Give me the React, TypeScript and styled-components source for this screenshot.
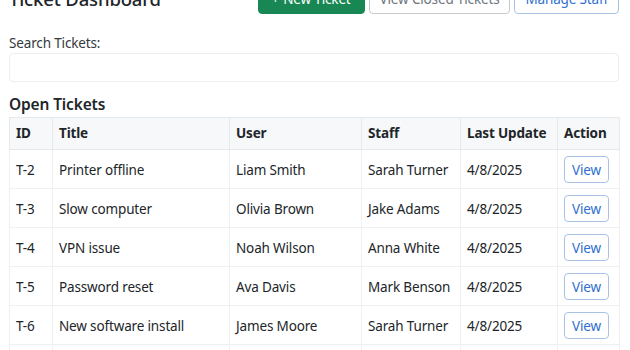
import styled, { createGlobalStyle } from "styled-components";

const GlobalStyle = createGlobalStyle`
  * {
    box-sizing: border-box;
  }
  body {
    margin: 0;
    background: #fff;
    color: #212529;
    font-family: "Noto Sans", "Open Sans", sans-serif;
    font-size: 13.5px;
    letter-spacing: -0.15px;
    overflow: hidden;
  }
`;

const Page = styled.div`
  padding: 0 11px 0 9px;
  width: 630px;
`;

const Header = styled.div`
  display: flex;
  align-items: center;
  justify-content: space-between;
  height: 31px;
  margin-top: -17px;
`;

const Title = styled.h1`
  margin: 0;
  font-size: 18.5px;
  font-weight: 500;
  line-height: 24px;
`;

const ButtonGroup = styled.div`
  display: flex;
  gap: 4px;
`;

const Button = styled.button<{ $variant: "success" | "secondary" | "primary" }>`
  height: 31px;
  padding: 0 ${(p) => (p.$variant === "success" ? 13 : 10)}px;
  border-radius: 4px;
  font-family: inherit;
  font-size: 13.5px;
  letter-spacing: -0.15px;
  line-height: 20px;
  cursor: pointer;
  background: ${(p) => (p.$variant === "success" ? "#198754" : "#fff")};
  color: ${(p) =>
    p.$variant === "success"
      ? "#fff"
      : p.$variant === "secondary"
      ? "#6c757d"
      : "#2f6fd1"};
  border: 1px solid
    ${(p) =>
      p.$variant === "success"
        ? "#198754"
        : p.$variant === "secondary"
        ? "#c6cace"
        : "#a9c3e6"};
`;

const Plus = styled.span`
  margin-right: 4px;
`;

const Label = styled.label`
  display: block;
  margin-top: 19px;
  line-height: 20px;
  color: #343a40;
`;

const SearchInput = styled.input`
  display: block;
  width: 100%;
  height: 29px;
  border: 1px solid #eceef0;
  border-radius: 4px;
  padding: 0 8px;
  font-family: inherit;
  font-size: 14px;
  outline: none;
`;

const SectionTitle = styled.h2`
  margin: 11px 0 2px;
  font-size: 15.5px;
  font-weight: 600;
  line-height: 22px;
`;

const Table = styled.table`
  width: 100%;
  border-collapse: collapse;
  table-layout: fixed;
`;

const HeadCell = styled.th<{ $width: number }>`
  width: ${(p) => p.$width}px;
  background: #f6f8f9;
  border: 1px solid #e6e9ec;
  padding: 6px;
  text-align: left;
  font-weight: 700;
  line-height: 19px;
  white-space: nowrap;
`;

const Cell = styled.td`
  border: 1px solid #eef0f2;
  padding: 6px 6px 5px;
  line-height: 20px;
  vertical-align: middle;
  white-space: nowrap;
`;

const ViewButton = styled.button`
  display: block;
  height: 27px;
  padding: 0 7px;
  border: 1px solid #a9c3e6;
  border-radius: 4px;
  background: #fff;
  color: #2f6fd1;
  font-family: inherit;
  font-size: 13.5px;
  letter-spacing: -0.15px;
  cursor: pointer;
`;

const columns = [
  { label: "ID", width: 43 },
  { label: "Title", width: 177 },
  { label: "User", width: 132 },
  { label: "Staff", width: 99 },
  { label: "Last Update", width: 97 },
  { label: "Action", width: 62 },
];

const tickets = [
  { id: "T-2", title: "Printer offline", user: "Liam Smith", staff: "Sarah Turner" },
  { id: "T-3", title: "Slow computer", user: "Olivia Brown", staff: "Jake Adams" },
  { id: "T-4", title: "VPN issue", user: "Noah Wilson", staff: "Anna White" },
  { id: "T-5", title: "Password reset", user: "Ava Davis", staff: "Mark Benson" },
  { id: "T-6", title: "New software install", user: "James Moore", staff: "Sarah Turner" },
  { id: "T-7", title: "Email not syncing", user: "Emma Clark", staff: "Jake Adams" },
];

export default function App() {
  return (
    <>
      <GlobalStyle />
      <Page>
        <Header>
          <Title>Ticket Dashboard</Title>
          <ButtonGroup>
            <Button $variant="success">
              <Plus>+</Plus>New Ticket
            </Button>
            <Button $variant="secondary">View Closed Tickets</Button>
            <Button $variant="primary">Manage Staff</Button>
          </ButtonGroup>
        </Header>
        <Label htmlFor="search">Search Tickets:</Label>
        <SearchInput id="search" type="text" />
        <SectionTitle>Open Tickets</SectionTitle>
        <Table>
          <thead>
            <tr>
              {columns.map((c) => (
                <HeadCell key={c.label} $width={c.width}>
                  {c.label}
                </HeadCell>
              ))}
            </tr>
          </thead>
          <tbody>
            {tickets.map((t) => (
              <tr key={t.id}>
                <Cell>{t.id}</Cell>
                <Cell>{t.title}</Cell>
                <Cell>{t.user}</Cell>
                <Cell>{t.staff}</Cell>
                <Cell>4/8/2025</Cell>
                <Cell>
                  <ViewButton>View</ViewButton>
                </Cell>
              </tr>
            ))}
          </tbody>
        </Table>
      </Page>
    </>
  );
}
